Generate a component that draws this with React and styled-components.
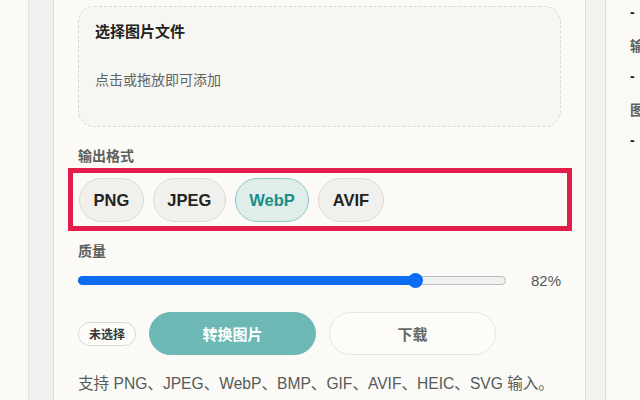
import React, { useState } from "react";
import styled, { createGlobalStyle } from "styled-components";

const GlobalStyle = createGlobalStyle`
  html, body {
    margin: 0;
    padding: 0;
    background: #faf9f5;
    font-family: "Liberation Sans", "Noto Sans CJK SC", sans-serif;
  }
  * { box-sizing: border-box; }
`;

// page frame: gutter | rail | main | strip | side
const Page = styled.div`
  display: flex;
  width: 640px;
  height: 400px;
  overflow: hidden;
  background: #faf9f5;
`;

const Gutter = styled.div`
  width: 29px;
  flex-shrink: 0;
  border-right: 1px solid #e3e4e0;
`;

const Rail = styled.div`
  width: 25px;
  flex-shrink: 0;
  background: #eef1ef;
  border-right: 1px solid #dcdfdc;
`;

const Main = styled.main`
  width: 532px;
  flex-shrink: 0;
  padding: 6px 24px 0 24px;
  background: #fbfaf6;
  border-right: 1px solid #dcdcd8;
  display: flex;
  flex-direction: column;
`;

const Strip = styled.div`
  width: 20px;
  flex-shrink: 0;
  background: #f3f2ee;
  border-right: 1px solid #dcdcd8;
`;

const Side = styled.aside`
  flex: 1;
  padding: 2px 0 0 24px;
  overflow: hidden;
  white-space: nowrap;
  display: flex;
  flex-direction: column;
`;

const SideLabel = styled.div`
  margin-top: 14px;
  font-size: 14px;
  line-height: 20px;
  font-weight: 700;
  color: #5b625f;
`;

const SideValue = styled.div`
  margin-top: ${(p) => (p.$first ? 0 : 10)}px;
  font-size: 14px;
  line-height: 20px;
  font-weight: 700;
  color: #222;
`;

const DropZone = styled.div`
  height: 121px;
  border: 1px dashed #d9d9d4;
  border-radius: 16px;
  background: #f7f6f2;
  padding: 15px 16px;
`;

const DropTitle = styled.div`
  font-size: 15px;
  line-height: 20px;
  font-weight: 700;
  color: #1f2321;
`;

const DropHint = styled.div`
  margin-top: 28px;
  font-size: 14px;
  line-height: 20px;
  color: #5f6562;
`;

const Label = styled.div`
  margin-top: ${(p) => p.$top}px;
  font-size: 14px;
  line-height: 18px;
  font-weight: 700;
  color: #5b625f;
`;

const Highlight = styled.div`
  margin: 3px -11px 0 -10px;
  border: 5px solid #e31d4b;
  padding: 5px 6px 4px;
  display: flex;
  gap: 9px;
`;

const Chip = styled.button`
  height: 44px;
  padding: 0 13.5px;
  border-radius: 22px;
  border: 1px solid ${(p) => (p.$active ? "#8ccac5" : "#dcdcd6")};
  background: ${(p) => (p.$active ? "#e0eeeb" : "#f1f0ec")};
  color: ${(p) => (p.$active ? "#1a8e89" : "#1f2321")};
  font-family: "Liberation Sans", "Noto Sans CJK SC", sans-serif;
  font-size: 16.5px;
  font-weight: 700;
  cursor: pointer;
`;

const SliderRow = styled.div`
  margin-top: 10px;
  height: 20px;
  display: flex;
  align-items: center;
  gap: 15px;
`;

const Track = styled.div`
  position: relative;
  flex: 1;
  height: 9px;
  border-radius: 5px;
  background: #eef1ef;
  border: 1px solid #b9bcba;
`;

const Fill = styled.div`
  position: absolute;
  left: -1px;
  top: -1px;
  bottom: -1px;
  border-radius: 5px;
  background: #0b6cf1;
`;

const Thumb = styled.div`
  position: absolute;
  top: 50%;
  width: 15px;
  height: 15px;
  margin: -7.5px 0 0 -7.5px;
  border-radius: 50%;
  background: #0b6cf1;
`;

const Percent = styled.div`
  width: 40px;
  text-align: right;
  font-size: 15px;
  color: #505755;
`;

const Actions = styled.div`
  margin-top: 22px;
  display: flex;
  align-items: center;
  gap: 13px;
`;

const Status = styled.span`
  height: 24px;
  padding: 0 10px;
  display: inline-flex;
  align-items: center;
  border: 1px solid #d8d9d5;
  border-radius: 12px;
  background: #fdfcf8;
  font-size: 12px;
  font-weight: 700;
  color: #333836;
`;

const Button = styled.button`
  width: 167px;
  height: 43px;
  border-radius: 22px;
  border: 1px solid ${(p) => (p.$primary ? "#6db8b4" : "#e3e6e3")};
  background: ${(p) => (p.$primary ? "#6db8b4" : "#fdfcf8")};
  color: ${(p) => (p.$primary ? "#fff" : "#646a67")};
  font-family: "Liberation Sans", "Noto Sans CJK SC", sans-serif;
  font-size: 15px;
  font-weight: 700;
  cursor: pointer;
`;

const Note = styled.p`
  margin: 19px 0 0;
  font-size: 15.6px;
  line-height: 20px;
  color: #555b59;
  white-space: nowrap;
`;

const formats = ["PNG", "JPEG", "WebP", "AVIF"];

export default function App() {
  const [format, setFormat] = useState("WebP");
  const quality = 82;
  // thumb position on the track
  const pos = 337 / 427 * 100;

  return (
    <>
      <GlobalStyle />
      <Page>
        <Gutter />
        <Rail />
        <Main>
          <DropZone>
            <DropTitle>选择图片文件</DropTitle>
            <DropHint>点击或拖放即可添加</DropHint>
          </DropZone>

          <Label $top={20}>输出格式</Label>
          <Highlight>
            {formats.map((f) => (
              <Chip key={f} $active={f === format} onClick={() => setFormat(f)}>
                {f}
              </Chip>
            ))}
          </Highlight>

          <Label $top={11}>质量</Label>
          <SliderRow>
            <Track>
              <Fill style={{ width: `${pos}%` }} />
              <Thumb style={{ left: `${pos}%` }} />
            </Track>
            <Percent>{quality}%</Percent>
          </SliderRow>

          <Actions>
            <Status>未选择</Status>
            <Button $primary>转换图片</Button>
            <Button>下载</Button>
          </Actions>

          <Note>支持 PNG、JPEG、WebP、BMP、GIF、AVIF、HEIC、SVG 输入。</Note>
        </Main>
        <Strip />
        <Side>
          <SideValue $first>-</SideValue>
          <SideLabel>输出格式</SideLabel>
          <SideValue>-</SideValue>
          <SideLabel>图片尺寸</SideLabel>
          <SideValue>-</SideValue>
        </Side>
      </Page>
    </>
  );
}
